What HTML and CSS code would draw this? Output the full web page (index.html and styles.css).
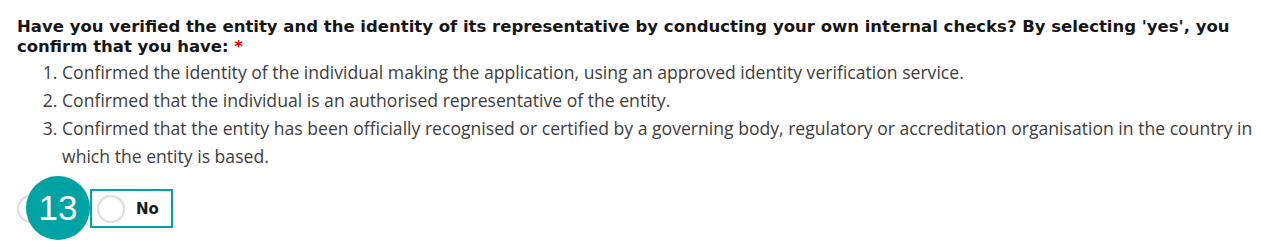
FILE: index.html
```html
<!DOCTYPE html>
<html>
<head>
<meta charset="utf-8">
<link rel="stylesheet" href="styles.css">
</head>
<body>
<div class="question">
  <p class="q-title">Have you verified the entity and the identity of its representative by conducting your own internal checks? By selecting 'yes', you confirm that you have: <span class="req">*</span></p>
  <ol class="q-list">
    <li>Confirmed the identity of the individual making the application, using an approved identity verification service.</li>
    <li>Confirmed that the individual is an authorised representative of the entity.</li>
    <li>Confirmed that the entity has been officially recognised or certified by a governing body, regulatory or accreditation organisation in the country in which the entity is based.</li>
  </ol>
  <div class="options">
    <label class="option option-yes"><span class="radio"></span><span class="opt-label">Yes</span></label>
    <label class="option option-no"><span class="radio"></span><span class="opt-label">No</span></label>
    <span class="badge">13</span>
  </div>
</div>
</body>
</html>
```
FILE: styles.css
```css
html, body {
  margin: 0;
  padding: 0;
  background: #ffffff;
}
.question {
  padding: 17px 17px 13px 17px;
}
.q-title {
  margin: 0;
  font-family: "DejaVu Sans", sans-serif;
  font-weight: bold;
  font-size: 16.5px;
  line-height: 20px;
  color: #161616;
  max-width: 1240px;
}
.req {
  color: #d40000;
}
.q-list {
  margin: 1px 0 0 0;
  padding-left: 45px;
  font-family: "Open Sans", sans-serif;
  font-size: 17.6px;
  line-height: 28px;
  color: #3d3d3d;
}
.options {
  position: relative;
  display: flex;
  align-items: center;
  margin-top: 19px;
  height: 39px;
}
.option {
  display: flex;
  align-items: center;
  box-sizing: border-box;
  height: 39px;
  font-family: "DejaVu Sans", sans-serif;
  font-weight: bold;
  font-size: 15px;
  color: #1a1a1a;
}
.option-yes {
  width: 73px;
}
.option-no {
  border: 2px solid #00a3a3;
  padding: 0 12px 0 5px;
}
.radio {
  display: inline-block;
  width: 24px;
  height: 24px;
  border: 2px solid #dcdcdc;
  border-radius: 50%;
  background: #ffffff;
  margin-right: 11px;
}
.badge {
  position: absolute;
  left: 9px;
  top: -13px;
  width: 64px;
  height: 64px;
  border-radius: 50%;
  background: #00a3a3;
  color: #ffffff;
  font-family: "Liberation Sans", Arial, sans-serif;
  font-size: 35px;
  display: flex;
  align-items: center;
  justify-content: center;
}
```
